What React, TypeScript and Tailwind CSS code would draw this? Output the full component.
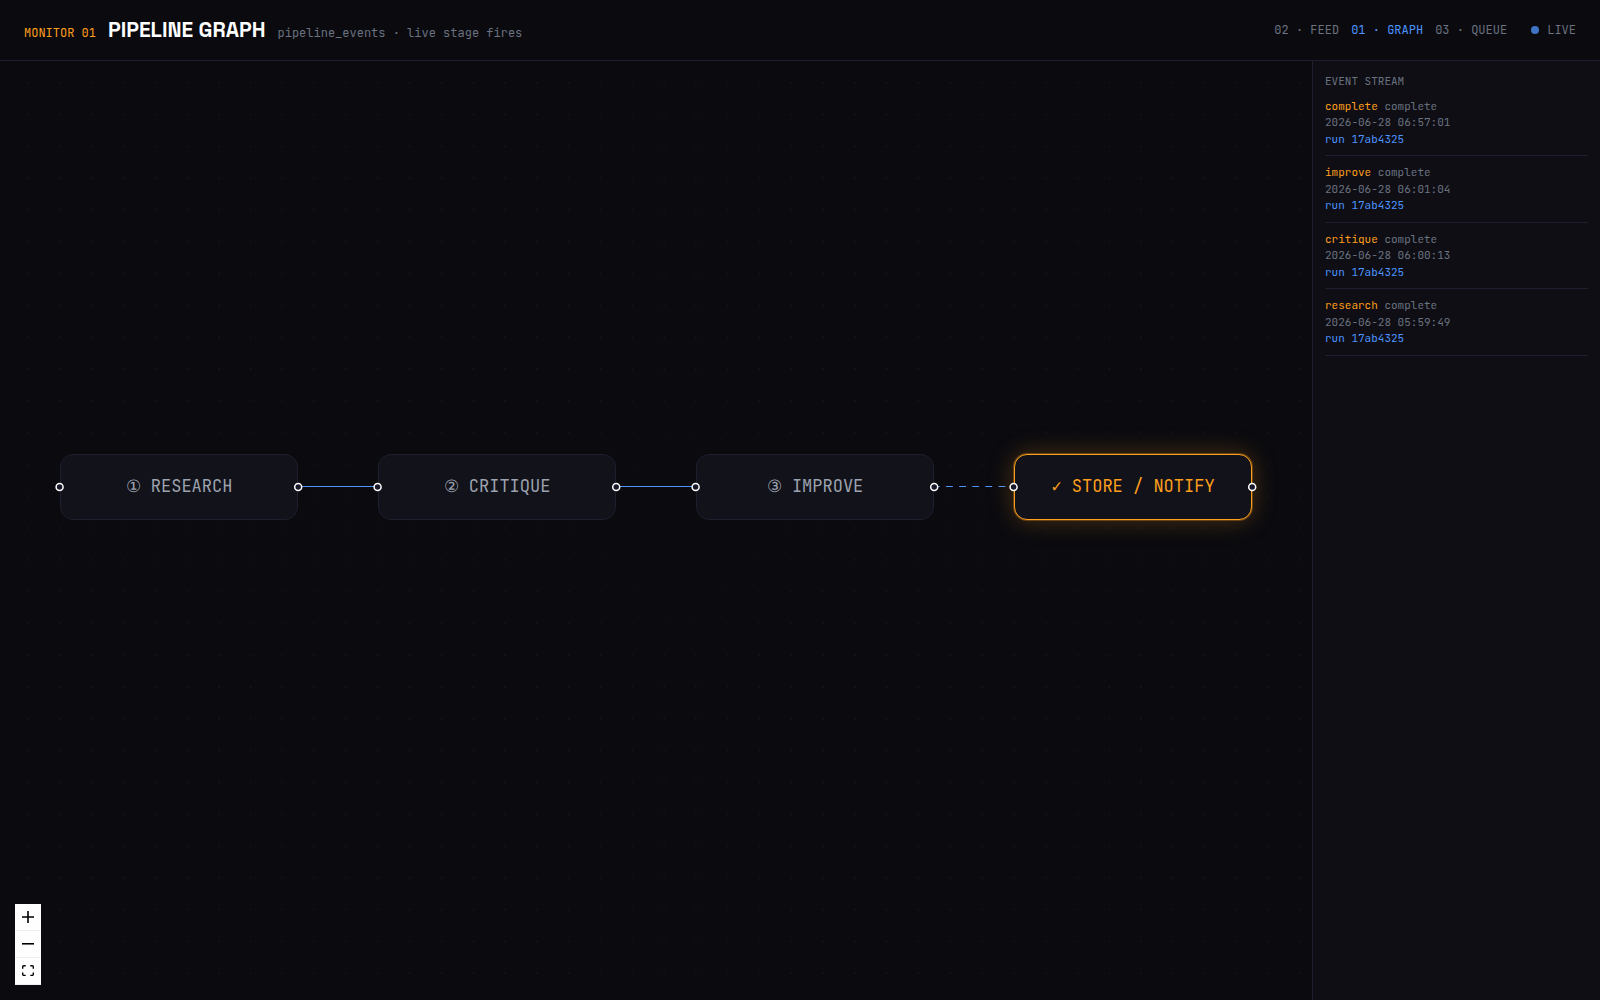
import React from 'react';
import { clsx } from 'clsx';

interface StageNode {
  id: string;
  label: string;
  x: number;
  active?: boolean;
}

interface StreamEvent {
  stage: string;
  status: string;
  time: string;
  run: string;
}

const NODE_Y = 393;
const NODE_WIDTH = 238;

const STAGES: StageNode[] = [
  { id: 'research', label: '① RESEARCH', x: 60 },
  { id: 'critique', label: '② CRITIQUE', x: 378 },
  { id: 'improve', label: '③ IMPROVE', x: 696 },
  { id: 'store', label: '✓ STORE / NOTIFY', x: 1014, active: true },
];

const EVENTS: StreamEvent[] = [
  { stage: 'complete', status: 'complete', time: '2026-06-28 06:57:01', run: '17ab4325' },
  { stage: 'improve', status: 'complete', time: '2026-06-28 06:01:04', run: '17ab4325' },
  { stage: 'critique', status: 'complete', time: '2026-06-28 06:00:13', run: '17ab4325' },
  { stage: 'research', status: 'complete', time: '2026-06-28 05:59:49', run: '17ab4325' },
];

const NAV = [
  { label: '02 · FEED', href: '#feed' },
  { label: '01 · GRAPH', href: '#graph', current: true },
  { label: '03 · QUEUE', href: '#queue' },
];

const Header: React.FC = () => (
  <header className="flex h-[61px] shrink-0 items-center justify-between border-b border-[#1e1e2e] px-6 text-xs">
    <div className="flex items-baseline gap-3">
      <span className="text-[#ff9f1c]">MONITOR 01</span>
      <h1 className="font-['Space_Grotesk',Roboto,sans-serif] text-[21px] leading-7 font-bold text-white">PIPELINE GRAPH</h1>
      <span className="text-[#6b7280]">pipeline_events · live stage fires</span>
    </div>
    <div className="flex items-center gap-6 text-[#6b7280]">
      <nav className="flex gap-3">
        {NAV.map((item) => (
          <a key={item.label} href={item.href} className={clsx(item.current && 'text-[#4d94ff]')}>
            {item.label}
          </a>
        ))}
      </nav>
      <div className="flex items-center gap-2">
        <span className="size-2 rounded-full bg-[#3f73c4]" />
        LIVE
      </div>
    </div>
  </header>
);

const Stage: React.FC<{ node: StageNode }> = ({ node }) => (
  <div
    className={clsx(
      'absolute flex h-[66px] w-[238px] items-center justify-center whitespace-pre rounded-[13px] border bg-[#12121a] text-[17px]',
      node.active
        ? 'border-[#ff9f1c] text-[#ff9f1c] shadow-[0_0_0_1px_#ff9f1c4d,0_0_26px_#ff9f1c47]'
        : 'border-[#1e1e2e] text-[#9ca3af]'
    )}
    style={{ left: node.x, top: NODE_Y }}
  >
    {node.label}
  </div>
);

// dotted background plus the edges between stages
const GraphLines: React.FC = () => (
  <svg className="absolute inset-0 h-full w-full" aria-hidden="true">
    <defs>
      <pattern id="dots" x="12.2" y="5.9" width="31.8" height="31.8" patternUnits="userSpaceOnUse">
        <circle cx="15.9" cy="15.9" r="0.75" fill="#1a1a28" />
      </pattern>
    </defs>
    <rect width="100%" height="100%" fill="url(#dots)" />
    {STAGES.slice(1).map((node, i) => (
      <path
        key={node.id}
        d={`M${STAGES[i].x + NODE_WIDTH} ${NODE_Y + 32.5}H${node.x}`}
        stroke="#4d94ff"
        strokeWidth="1.2"
        strokeDasharray={node.active ? '6.8 6.3' : undefined}
        strokeDashoffset={node.active ? 1 : undefined}
      />
    ))}
  </svg>
);

const Handles: React.FC = () => (
  <svg className="pointer-events-none absolute inset-0 h-full w-full" aria-hidden="true">
    {STAGES.flatMap((node) => [node.x - 0.4, node.x + NODE_WIDTH + 0.2]).map((cx) => (
      <circle key={cx} cx={cx} cy={NODE_Y + 33} r="3.5" fill="#1a192b" stroke="#ffffff" strokeWidth="1.5" />
    ))}
  </svg>
);

const controlButton = 'flex h-[27px] w-[26px] items-center justify-center border-b border-[#eeeeee] bg-[#fefefe]';

const Controls: React.FC = () => (
  <div className="absolute bottom-[15px] left-[15px] flex flex-col text-black">
    <button type="button" aria-label="Zoom in" className={controlButton}>
      <svg className="size-3" viewBox="0 0 32 32" fill="currentColor">
        <path d="M32 18.133H18.133V32h-4.266V18.133H0v-4.266h13.867V0h4.266v13.867H32z" />
      </svg>
    </button>
    <button type="button" aria-label="Zoom out" className={controlButton}>
      <svg className="w-3" viewBox="0 0 32 5" fill="currentColor">
        <path d="M0 0h32v4.2H0z" />
      </svg>
    </button>
    <button type="button" aria-label="Fit view" className={controlButton}>
      <svg className="w-3" viewBox="0 0 32 30" fill="currentColor">
        <path d="M3.692 4.63c0-.53.4-.938.939-.938h5.215V0H4.708C2.13 0 0 2.054 0 4.63v5.216h3.692V4.631zM27.354 0h-5.2v3.692h5.17c.53 0 .984.4.984.939v5.215H32V4.631A4.624 4.624 0 0027.354 0zm.954 24.83c0 .532-.4.94-.939.94h-5.215v3.768h5.215c2.577 0 4.631-2.13 4.631-4.707v-5.139h-3.692v5.139zm-23.677.94a.919.919 0 01-.939-.94v-5.138H0v5.139c0 2.577 2.13 4.707 4.708 4.707h5.138V25.77H4.631z" />
      </svg>
    </button>
  </div>
);

const EventStream: React.FC = () => (
  <aside className="w-72 shrink-0 border-l border-[#1e1e2e] bg-[#0e0e14] p-3 text-[11px] leading-normal">
    <h2 className="text-[#6b7280]">EVENT STREAM</h2>
    <ul>
      {EVENTS.map((event) => (
        <li key={event.stage} className="border-b border-[#1e1e2e] py-2 text-[#6b7280]">
          <div>
            <span className="text-[#ff9f1c]">{event.stage}</span> {event.status}
          </div>
          <div>{event.time}</div>
          <div className="text-[#4d94ff]">run {event.run}</div>
        </li>
      ))}
    </ul>
  </aside>
);

export default function App() {
  return (
    <div className="flex min-h-screen flex-col bg-[#0a0a0f] font-['JetBrains_Mono','Liberation_Mono',monospace]">
      <Header />
      <div className="flex flex-1">
        <main className="relative min-w-0 flex-1 overflow-hidden">
          <GraphLines />
          {STAGES.map((node) => (
            <Stage key={node.id} node={node} />
          ))}
          <Handles />
          <Controls />
        </main>
        <EventStream />
      </div>
    </div>
  );
}
